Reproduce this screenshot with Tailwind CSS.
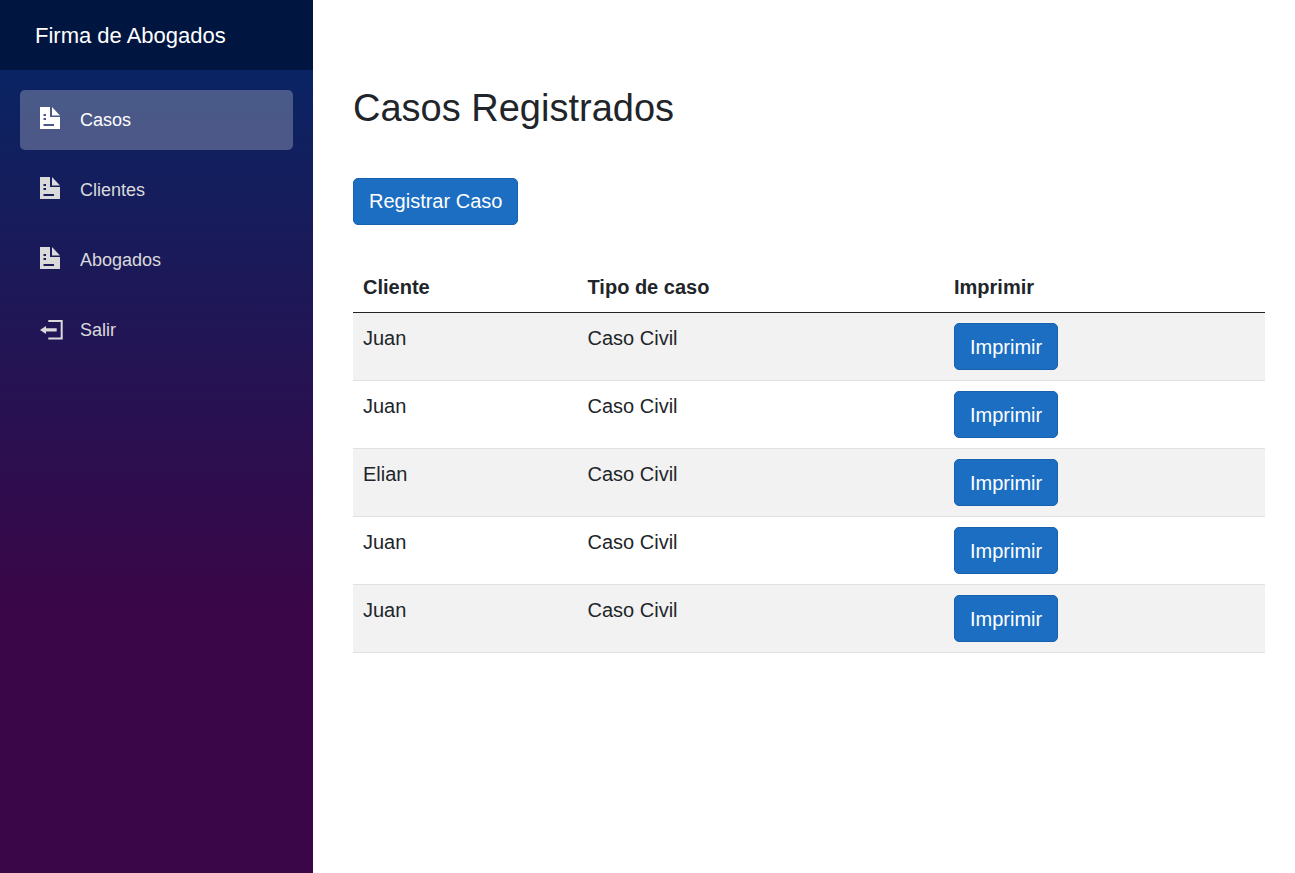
<!DOCTYPE html>
<html lang="es">
<head>
<meta charset="utf-8">
<script src="https://cdn.jsdelivr.net/npm/@tailwindcss/browser@4"></script>
<title>Casos</title>
</head>
<body class="font-['Liberation_Sans',Arial,sans-serif] bg-white text-[#212529]">
<div class="flex h-[873px] overflow-hidden">
  <aside class="w-[313px] shrink-0 flex flex-col bg-[linear-gradient(180deg,#0a2463_8%,#3a0647_70%)]">
    <div class="h-[70px] bg-[#001641] pl-[35px] flex items-center text-[22px] text-white">Firma de Abogados</div>
    <nav class="px-[20px] pt-[20px] flex flex-col gap-[10px] text-[18px]">
      <a class="h-[60px] flex items-center pl-[20px] gap-[20px] rounded-[5px] bg-white/25 text-white">
        <svg class="w-[20px] h-[22px] -mt-[4px]" viewBox="0 0 20 22"><path fill="currentColor" fill-rule="evenodd" d="M0 0H10V10H20V22H0ZM3.500 7H6V9H3.500ZM3.500 11H6V13H3.500ZM3.500 17H14V19H3.500Z"/><path fill="currentColor" d="M12 0L20 8.500H12Z"/></svg>
        <span>Casos</span>
      </a>
      <a class="h-[60px] flex items-center pl-[20px] gap-[20px] text-[#dadada]">
        <svg class="w-[20px] h-[22px] -mt-[4px]" viewBox="0 0 20 22"><path fill="currentColor" fill-rule="evenodd" d="M0 0H10V10H20V22H0ZM3.500 7H6V9H3.500ZM3.500 11H6V13H3.500ZM3.500 17H14V19H3.500Z"/><path fill="currentColor" d="M12 0L20 8.500H12Z"/></svg>
        <span>Clientes</span>
      </a>
      <a class="h-[60px] flex items-center pl-[20px] gap-[20px] text-[#dadada]">
        <svg class="w-[20px] h-[22px] -mt-[4px]" viewBox="0 0 20 22"><path fill="currentColor" fill-rule="evenodd" d="M0 0H10V10H20V22H0ZM3.500 7H6V9H3.500ZM3.500 11H6V13H3.500ZM3.500 17H14V19H3.500Z"/><path fill="currentColor" d="M12 0L20 8.500H12Z"/></svg>
        <span>Abogados</span>
      </a>
      <a class="h-[60px] flex items-center pl-[20px] gap-[20px] text-[#dadada]">
        <svg class="w-[24px] h-[20px] -mr-[4px] -mt-[1px]" viewBox="0 0 24 20"><path fill="currentColor" d="M8.300 0H22.700V19.500H8.300V17.500H20.700V2H8.300Z"/><path fill="currentColor" d="M0 10L6 6V8.300H16.700V11.500H6V14Z"/></svg>
        <span>Salir</span>
      </a>
    </nav>
  </aside>
  <main class="flex-1 pl-[40px] pr-[30px] pt-[85px]">
    <h1 class="text-[38px] leading-[46px] font-normal">Casos Registrados</h1>
    <button class="mt-[47px] block h-[47px] px-[15px] pb-[2px] rounded-[5px] bg-[#1b6ec2] border border-[#1861ac] text-[20px] text-white">Registrar Caso</button>
    <table class="mt-[30px] w-[912px] table-fixed border-collapse text-[20px]">
      <colgroup><col class="w-[224.500px]"><col class="w-[366.500px]"><col></colgroup>
      <thead>
        <tr class="h-[57px] border-b border-[#212529]">
          <th class="px-[10px] pt-[8px] text-left font-bold">Cliente</th>
          <th class="px-[10px] pt-[8px] text-left font-bold">Tipo de caso</th>
          <th class="px-[10px] pt-[8px] text-left font-bold">Imprimir</th>
        </tr>
      </thead>
      <tbody>
        <tr class="border-b border-[#dee2e6] bg-[#f2f2f2]">
          <td class="p-[10px] align-top leading-[30px]">Juan</td><td class="p-[10px] align-top leading-[30px]">Caso Civil</td>
          <td class="p-[10px] align-top"><button class="block h-[47px] px-[15px] pt-[2px] rounded-[5px] bg-[#1b6ec2] border border-[#1861ac] text-[20px] text-white">Imprimir</button></td>
        </tr>
        <tr class="border-b border-[#dee2e6]">
          <td class="p-[10px] align-top leading-[30px]">Juan</td><td class="p-[10px] align-top leading-[30px]">Caso Civil</td>
          <td class="p-[10px] align-top"><button class="block h-[47px] px-[15px] pt-[2px] rounded-[5px] bg-[#1b6ec2] border border-[#1861ac] text-[20px] text-white">Imprimir</button></td>
        </tr>
        <tr class="border-b border-[#dee2e6] bg-[#f2f2f2]">
          <td class="p-[10px] align-top leading-[30px]">Elian</td><td class="p-[10px] align-top leading-[30px]">Caso Civil</td>
          <td class="p-[10px] align-top"><button class="block h-[47px] px-[15px] pt-[2px] rounded-[5px] bg-[#1b6ec2] border border-[#1861ac] text-[20px] text-white">Imprimir</button></td>
        </tr>
        <tr class="border-b border-[#dee2e6]">
          <td class="p-[10px] align-top leading-[30px]">Juan</td><td class="p-[10px] align-top leading-[30px]">Caso Civil</td>
          <td class="p-[10px] align-top"><button class="block h-[47px] px-[15px] pt-[2px] rounded-[5px] bg-[#1b6ec2] border border-[#1861ac] text-[20px] text-white">Imprimir</button></td>
        </tr>
        <tr class="border-b border-[#dee2e6] bg-[#f2f2f2]">
          <td class="p-[10px] align-top leading-[30px]">Juan</td><td class="p-[10px] align-top leading-[30px]">Caso Civil</td>
          <td class="p-[10px] align-top"><button class="block h-[47px] px-[15px] pt-[2px] rounded-[5px] bg-[#1b6ec2] border border-[#1861ac] text-[20px] text-white">Imprimir</button></td>
        </tr>
      </tbody>
    </table>
  </main>
</div>
</body>
</html>
